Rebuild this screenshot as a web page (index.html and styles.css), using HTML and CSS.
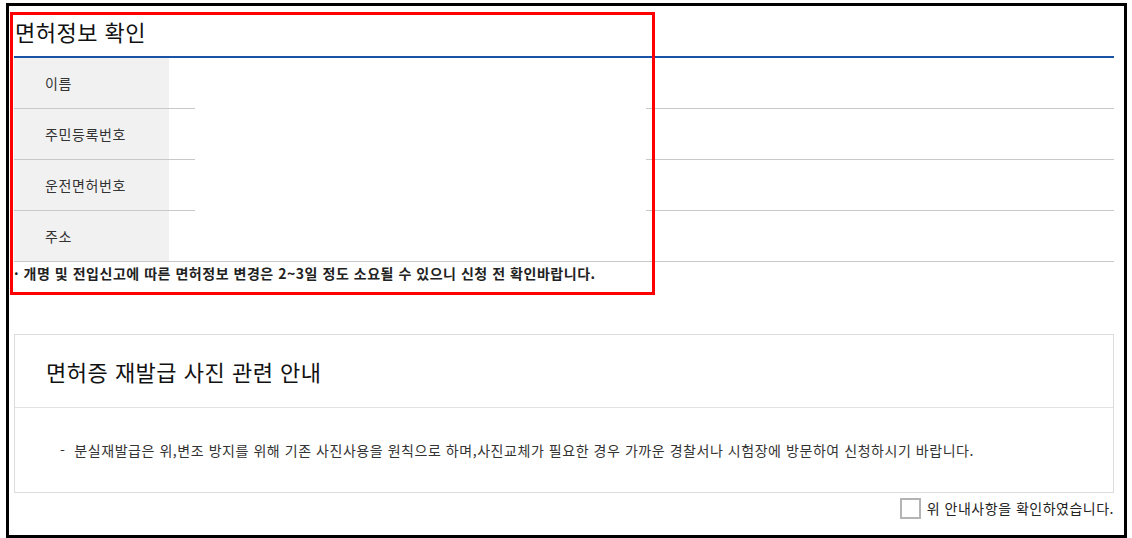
FILE: index.html
```html
<!DOCTYPE html>
<html lang="ko">
<head>
<meta charset="utf-8">
<link rel="stylesheet" href="styles.css">
</head>
<body>
<div class="frame">
  <section class="license">
    <h2 class="license-title">면허정보 확인</h2>
    <div class="table">
      <div class="row"><div class="label">이름</div><div class="value"></div></div>
      <div class="row"><div class="label">주민등록번호</div><div class="value"></div></div>
      <div class="row"><div class="label">운전면허번호</div><div class="value"></div></div>
      <div class="row"><div class="label">주소</div><div class="value"></div></div>
      <div class="mask"></div>
    </div>
    <p class="note">· 개명 및 전입신고에 따른 면허정보 변경은 2~3일 정도 소요될 수 있으니 신청 전 확인바랍니다.</p>
  </section>

  <section class="guide">
    <h3 class="guide-title">면허증 재발급 사진 관련 안내</h3>
    <div class="guide-body">-&nbsp; 분실재발급은 위,변조 방지를 위해 기존 사진사용을 원칙으로 하며,사진교체가 필요한 경우 가까운 경찰서나 시험장에 방문하여 신청하시기 바랍니다.</div>
  </section>

  <label class="agree">
    <span class="checkbox"></span>
    <span class="agree-text">위 안내사항을 확인하였습니다.</span>
  </label>

  <div class="highlight"></div>
</div>
</body>
</html>
```

FILE: styles.css
```css
* {
  box-sizing: border-box;
}

html, body {
  margin: 0;
  padding: 0;
  background: #fff;
}

body {
  font-family: "Noto Sans CJK KR", "Noto Sans", sans-serif;
  color: #333;
  padding: 3px 5px 0 6px;
  letter-spacing: 0.5px;
}

.frame {
  position: relative;
  border: 3px solid #000;
  height: 535px;
  width: 1121px;
  padding: 0 10px 0 5px;
}

.license-title {
  margin: 0;
  height: 52px;
  line-height: 50px;
  font-size: 22px;
  font-weight: normal;
  color: #111;
  border-bottom: 2px solid #1b52a6;
  padding-left: 1px;
}

.table {
  position: relative;
}

.row {
  display: flex;
  height: 51px;
  border-bottom: 1px solid #c8c8c8;
}

.label {
  width: 155px;
  background: #f1f1f1;
  padding-left: 31px;
  font-size: 14px;
  line-height: 50px;
  color: #333;
  letter-spacing: 0.6px;
}

.value {
  flex: 1;
}

.mask {
  position: absolute;
  left: 181px;
  top: 0;
  width: 451px;
  height: 203px;
  background: #fff;
}

.note {
  margin: 0;
  font-size: 14px;
  font-weight: bold;
  line-height: 22px;
  color: #222;
  letter-spacing: 0.53px;
}

.guide {
  margin-top: 50px;
  border: 1px solid #dcdcdc;
  width: 1100px;
}

.guide-title {
  margin: 0;
  height: 73px;
  line-height: 72px;
  padding-left: 31px;
  font-size: 22px;
  font-weight: normal;
  color: #111;
  border-bottom: 1px solid #e2e2e2;
}

.guide-body {
  height: 84px;
  line-height: 84px;
  padding-left: 45px;
  font-size: 14px;
  color: #333;
  letter-spacing: 0.55px;
}

.agree {
  display: flex;
  justify-content: flex-end;
  align-items: center;
  gap: 6px;
  margin-top: 5px;
  font-size: 14px;
  color: #222;
}

.checkbox {
  width: 21px;
  height: 21px;
  border: 2px solid #b4b4b4;
  background: #fff;
}

.agree-text {
  line-height: 21px;
}

.highlight {
  position: absolute;
  left: 1px;
  top: 6px;
  width: 645px;
  height: 283px;
  border: 3px solid #ff0000;
  pointer-events: none;
}
```
